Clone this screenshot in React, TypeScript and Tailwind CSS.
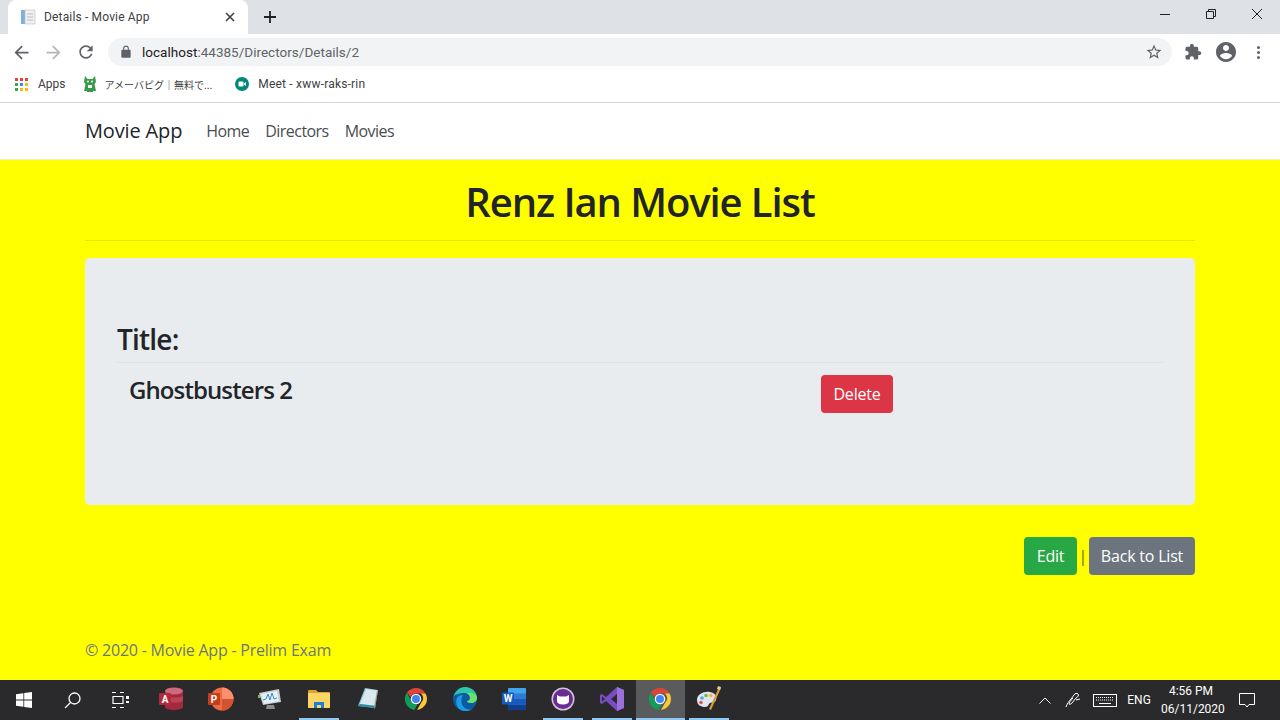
import React from "react";

const F = "font-['Open_Sans','Noto_Sans',sans-serif]";

function M({ d, size = 16, color = "#5f6368", className = "" }: { d: string; size?: number; color?: string; className?: string }) {
  return (
    <svg width={size} height={size} viewBox="0 0 24 24" fill={color} className={`shrink-0 ${className}`}>
      <path d={d} />
    </svg>
  );
}

const BACK = "M20 11H7.83l5.59-5.59L12 4l-8 8 8 8 1.41-1.41L7.83 13H20v-2z";
const FWD = "M4 11h12.17l-5.59-5.59L12 4l8 8-8 8-1.41-1.41L16.17 13H4v-2z";
const RELOAD = "M17.65 6.35C16.2 4.9 14.21 4 12 4c-4.42 0-7.99 3.58-7.99 8s3.57 8 7.99 8c3.73 0 6.84-2.55 7.73-6h-2.08c-.82 2.33-3.04 4-5.65 4-3.31 0-6-2.69-6-6s2.69-6 6-6c1.66 0 3.14.69 4.22 1.78L13 11h7V4l-2.35 2.35z";
const STAR = "M22 9.24l-7.19-.62L12 2 9.19 8.63 2 9.24l5.46 4.73L5.82 21 12 17.27 18.18 21l-1.63-7.03L22 9.24zM12 15.4l-3.76 2.27 1-4.28-3.32-2.88 4.38-.38L12 6.1l1.71 4.04 4.38.38-3.32 2.88 1 4.28L12 15.4z";
const PUZZLE = "M20.5 11H19V7c0-1.1-.9-2-2-2h-4V3.5C13 2.12 11.88 1 10.5 1S8 2.12 8 3.5V5H4c-1.1 0-1.99.9-1.99 2v3.8H3.5c1.49 0 2.7 1.21 2.7 2.7s-1.21 2.7-2.7 2.7H2V20c0 1.1.9 2 2 2h3.8v-1.5c0-1.49 1.21-2.7 2.7-2.7 1.49 0 2.7 1.21 2.7 2.7V22H17c1.1 0 2-.9 2-2v-4h1.5c1.38 0 2.5-1.12 2.5-2.5S21.88 11 20.5 11z";
const ACCOUNT = "M12 2C6.48 2 2 6.48 2 12s4.48 10 10 10 10-4.48 10-10S17.52 2 12 2zm0 3c1.66 0 3 1.34 3 3s-1.34 3-3 3-3-1.34-3-3 1.34-3 3-3zm0 14.2c-2.5 0-4.71-1.28-6-3.22.03-1.99 4-3.08 6-3.08 1.99 0 5.97 1.09 6 3.08-1.29 1.94-3.5 3.22-6 3.22z";
const LOCK = "M18 8h-1V6c0-2.76-2.24-5-5-5S7 3.24 7 6v2H6c-1.1 0-2 .9-2 2v10c0 1.1.9 2 2 2h12c1.1 0 2-.9 2-2V10c0-1.1-.9-2-2-2zM9 6c0-1.66 1.34-3 3-3s3 1.34 3 3v2H9V6z";

function AppsGrid() {
  const c = ["#ea4335", "#ea4335", "#ea4335", "#34a853", "#4285f4", "#fbbc04", "#34a853", "#fbbc04", "#fbbc04"];
  return (
    <div className="grid grid-cols-3 gap-[2px] w-[13px] shrink-0">
      {c.map((x, i) => (
        <span key={i} className="w-[3px] h-[3px]" style={{ background: x }} />
      ))}
    </div>
  );
}

function ChromeLogo({ size = 24 }: { size?: number }) {
  return (
    <svg width={size} height={size} viewBox="0 0 48 48">
      <path d="M24 2a22 22 0 0 1 19.05 11H24a11 11 0 0 0-10.4 7.5L5.9 11.2A22 22 0 0 1 24 2z" fill="#db4437" />
      <path d="M43.05 13A22 22 0 0 1 26 45.9l9.5-16.4a11 11 0 0 0-2-16.5z" fill="#fcc934" />
      <path d="M5.9 11.2 15.4 29.5a11 11 0 0 0 11.2 5.4L20.8 45.8A22 22 0 0 1 5.9 11.2z" fill="#0f9d58" />
      <circle cx="24" cy="24" r="10.5" fill="#fff" />
      <circle cx="24" cy="24" r="8" fill="#4285f4" />
    </svg>
  );
}

function Chrome() {
  return (
    <div className="font-['Roboto',sans-serif]">
      <div className="h-[34px] bg-[#dee1e6] flex items-end pl-2">
        <div className="w-[240px] h-[34px] bg-white rounded-t-[8px] flex items-center pl-[12px] pr-[12px] text-[12px] tracking-[0.16px] text-[#3c4043]">
          <svg width="16" height="16" viewBox="0 0 16 16" className="mr-[8px] shrink-0">
            <rect x="1" y="1" width="4" height="14" fill="#7fb0dc" />
            <rect x="5" y="1" width="10" height="14" fill="#eef0f2" stroke="#b9bec4" strokeWidth="0.6" />
            <path d="M7 5h6M7 8h6M7 11h6" stroke="#b9bec4" strokeWidth="1" />
          </svg>
          <span className="flex-1">Details - Movie App</span>
          <svg width="10" height="10" viewBox="0 0 10 10" stroke="#3c4043" strokeWidth="1.6" className="mr-[1px]">
            <path d="M1 1l8 8M9 1l-8 8" />
          </svg>
        </div>
        <svg width="12" height="12" viewBox="0 0 12 12" stroke="#202124" strokeWidth="1.8" className="ml-[16px] mb-[11px]">
          <path d="M6 0v12M0 6h12" />
        </svg>
        <div className="flex-1" />
        <div className="flex self-start items-center gap-[36px] pr-[18px] h-[28px]">
          <svg width="10" height="10" viewBox="0 0 10 10" stroke="#202124" strokeWidth="1" fill="none">
            <path d="M0 5.5h10" />
          </svg>
          <svg width="10" height="10" viewBox="0 0 10 10" stroke="#202124" strokeWidth="1" fill="none">
            <path d="M.5 2.5h7v7h-7zM2.5 2.5v-2h7v7h-2" />
          </svg>
          <svg width="10" height="10" viewBox="0 0 10 10" stroke="#202124" strokeWidth="1" fill="none">
            <path d="M0 0l10 10M10 0L0 10" />
          </svg>
        </div>
      </div>
      <div className="h-[36px] bg-white flex items-center pl-[11px]">
        <M d={BACK} size={21} />
        <M d={FWD} size={21} color="#b4b7bb" className="ml-[11px]" />
        <M d={RELOAD} size={20} className="ml-[12px]" />
        <div className="ml-[12px] w-[1064px] h-[28px] bg-[#f1f3f4] rounded-full flex items-center pl-[11px] pr-[9px] text-[13.5px] tracking-[0.02px]">
          <M d={LOCK} size={14} className="mr-[9px]" />
          <span className="text-[#202124]">localhost</span>
          <span className="text-[#5f6368]">:44385/Directors/Details/2</span>
          <div className="flex-1" />
          <M d={STAR} size={18} />
        </div>
        <M d={PUZZLE} size={18} className="ml-[12px]" />
        <M d={ACCOUNT} size={24} className="ml-[12px] mr-[19px]" />
        <div className="flex flex-col gap-[2px]">
          <span className="w-[3px] h-[3px] rounded-full bg-[#5f6368]" />
          <span className="w-[3px] h-[3px] rounded-full bg-[#5f6368]" />
          <span className="w-[3px] h-[3px] rounded-full bg-[#5f6368]" />
        </div>
      </div>
      <div className="h-[33px] bg-white flex items-center pl-[15px] pb-[4px] text-[12px] text-[#3c4043] border-b border-[#d6d6d6]">
        <AppsGrid />
        <span className="ml-[10px]">Apps</span>
        <svg width="14" height="16" viewBox="0 0 14 16" className="ml-[17px] shrink-0">
          <path d="M2 0l2.5 3h5L12 0l1 6-1.500 2L13 15h-3v1H4v-1H1l1.500-7L1 6z" fill="#3a9a4b" />
          <circle cx="5" cy="5.500" r="1" fill="#fff" />
          <circle cx="9" cy="5.500" r="1" fill="#fff" />
          <rect x="5" y="9" width="4" height="3" fill="#fff" />
        </svg>
        <span className="ml-[8px] font-['Noto_Sans_CJK_JP',sans-serif] text-[10px]">アメーバピグ｜無料で...</span>
        <svg width="16" height="16" viewBox="0 0 16 16" className="ml-[22px] shrink-0">
          <circle cx="8" cy="8" r="7" fill="#00897b" />
          <rect x="4.500" y="5.500" width="5" height="5" rx="1" fill="#fff" />
          <path d="M10 7.500l2-1.500v4l-2-1.500z" fill="#fff" />
        </svg>
        <span className="ml-[8px] tracking-[0.2px]">Meet - xww-raks-rin</span>
      </div>
    </div>
  );
}

function Access() {
  return (
    <svg width="26" height="24" viewBox="0 0 26 24">
      <path d="M6 4c0-4 18-4 18 0v16c0 4-18 4-18 0z" fill="#a4293f" />
      <ellipse cx="15" cy="4" rx="9" ry="3.500" fill="#cf6b7e" />
      <path d="M6 9c3 2 15 2 18 0v5c-3 2-15 2-18 0z" fill="#bb4458" />
      <rect x="0" y="6" width="12" height="12" rx="1" fill="#b02a3a" />
      <text x="6" y="15.500" textAnchor="middle" fontSize="10" fontWeight="700" fill="#fff" fontFamily="Roboto, sans-serif">A</text>
    </svg>
  );
}

function Ppt() {
  return (
    <svg width="26" height="24" viewBox="0 0 26 24">
      <circle cx="14" cy="12" r="11.500" fill="#ed6c47" />
      <path d="M14 .5A11.500 11.500 0 0 1 25.500 12H14z" fill="#ff8f6b" />
      <path d="M14 12h11.500A11.500 11.500 0 0 1 14 23.500z" fill="#d35230" />
      <rect x="0" y="6" width="12" height="12" rx="1" fill="#c43e1c" />
      <text x="6" y="15.500" textAnchor="middle" fontSize="10" fontWeight="700" fill="#fff" fontFamily="Roboto, sans-serif">P</text>
    </svg>
  );
}

function Perf() {
  return (
    <svg width="24" height="24" viewBox="0 0 24 24">
      <path d="M1 6l20-4 2 13-18 3z" fill="#c9ccd0" />
      <path d="M3 7l16-3 2 10-15 3z" fill="#e4f0f7" />
      <path d="M5 13l3-1 2-5 2 6 2-7 2 6 3-1" fill="none" stroke="#3d8ec4" strokeWidth="1" />
      <path d="M9 18h7l1 4H8z" fill="#8a8d90" />
      <rect x="0" y="8" width="2" height="3" fill="#7bc043" />
    </svg>
  );
}

function Folder() {
  return (
    <svg width="22" height="20" viewBox="0 0 22 20">
      <path d="M0 2a1 1 0 0 1 1-1h7l2 2h11a1 1 0 0 1 1 1v14a1 1 0 0 1-1 1H1a1 1 0 0 1-1-1z" fill="#d9a52c" />
      <rect x="0" y="4" width="22" height="15" rx="1" fill="#fbd666" />
      <path d="M6 19v-6h10v6h-3v-3h-4v3z" fill="#1c7fd6" />
    </svg>
  );
}

function Notes() {
  return (
    <svg width="22" height="24" viewBox="0 0 22 24">
      <path d="M8 1l13 2-3 18-17-2z" fill="#8fc7dc" />
      <path d="M9 2l11 1.500-3 15L3 17z" fill="#d9e9ef" />
      <path d="M1 19l17 2 1-2-16-2z" fill="#2b8ba8" />
      <path d="M20 5l1-2-3 18-1 2z" fill="#c98a2e" />
    </svg>
  );
}

function Edge() {
  return (
    <svg width="24" height="24" viewBox="0 0 24 24">
      <circle cx="12" cy="12" r="12" fill="#0c59a4" />
      <path d="M.5 10C2 4 7 0 12 0c7 0 12 5 12 11 0 3-3 5-6 5-2 0-4-1-4-2 0 0 3 0 3-3 0-3-3-5-6-5C7 6 2 7 .5 10z" fill="#2fc5a8" />
      <path d="M24 11c0 3-3 5-6 5-2 0-4-1-4-2 2 0 3-1 3-3 0-2-1-4-3-5 5-1 10 1 10 5z" fill="#6ce06a" />
      <path d="M8 23c-4-2-6-7-4-12 1-2 3-3 6-3-3 4-2 12 4 14 2 1 4 1 6 0-3 2-8 3-12 1z" fill="#1b9de2" />
    </svg>
  );
}

function Word() {
  return (
    <svg width="24" height="22" viewBox="0 0 24 22">
      <rect x="6" y="0" width="18" height="22" rx="1" fill="#41a5ee" />
      <rect x="6" y="5.500" width="18" height="5.500" fill="#2b7cd3" />
      <rect x="6" y="11" width="18" height="5.500" fill="#185abd" />
      <path d="M6 16.500h18V21a1 1 0 0 1-1 1H7a1 1 0 0 1-1-1z" fill="#103f91" />
      <rect x="0" y="4.500" width="12" height="12" rx="1" fill="#185abd" />
      <text x="6" y="14" textAnchor="middle" fontSize="10" fontWeight="700" fill="#fff" fontFamily="Roboto, sans-serif">W</text>
    </svg>
  );
}

function Cat() {
  return (
    <svg width="24" height="24" viewBox="0 0 24 24">
      <circle cx="12" cy="12" r="11.500" fill="#cfc6dd" />
      <circle cx="12" cy="12" r="10" fill="#6a2c91" />
      <path d="M6 8l3 1.500h6L18 8v6c0 2-2 3.500-6 3.500S6 16 6 14z" fill="#fff" />
    </svg>
  );
}

function VS() {
  return (
    <svg width="24" height="24" viewBox="0 0 24 24">
      <path d="M17 0l7 3v18l-7 3-11-10-4 3-2-1V8l2-1 4 3zM17 7l-6 5 6 5z" fill="#7a4cc2" />
      <path d="M17 0l7 3v18l-7 3z" fill="#9b6fdc" />
      <path d="M2 9.500l3 2.500-3 2.500z" fill="#2a2a2c" />
    </svg>
  );
}

function Palette() {
  return (
    <svg width="26" height="26" viewBox="0 0 26 26">
      <path d="M1 14C1 8 8 5 14 6c5 1 7 4 6 8-1 3-4 2-6 3s-1 4-5 4-8-2-8-7z" fill="#dfe6ee" />
      <circle cx="6" cy="12" r="1.800" fill="#4ea5de" />
      <circle cx="10" cy="9.500" r="1.800" fill="#7ab648" />
      <circle cx="15" cy="9.500" r="1.800" fill="#f2b134" />
      <circle cx="5" cy="16.500" r="1.800" fill="#e2574c" />
      <path d="M23 1l2 1-10 22-2-1z" fill="#d79a3e" />
      <path d="M22 0l3 1-1 3-3-1z" fill="#e9c98f" />
    </svg>
  );
}

function TaskApp({ active = false, running = false, children }: { active?: boolean; running?: boolean; children: React.ReactNode }) {
  return (
    <div className={`w-[48.8px] h-[40px] flex flex-col items-center ${active ? "bg-[#5a5b5d]" : ""}`}>
      <div className="flex-1 flex items-center justify-center">{children}</div>
      <div className={`h-[2px] ${active ? "w-full" : "w-[40px]"} ${running || active ? "bg-[#8fc8f2]" : ""}`} />
    </div>
  );
}

function Taskbar() {
  return (
    <div className="h-[40px] bg-[#2a2a2c] flex items-center text-white font-['Roboto',sans-serif]">
      <div className="w-[48px] flex justify-center">
        <svg width="16" height="16" viewBox="0 0 16 16" fill="#fff">
          <path d="M0 2.300 7.400 1.200V7.600H0ZM8.200 1.100 16 0V7.600H8.200ZM0 8.400H7.400V14.800L0 13.700ZM8.200 8.400H16V16L8.200 14.900Z" />
        </svg>
      </div>
      <div className="w-[48px] flex justify-center">
        <svg width="17" height="17" viewBox="0 0 17 17" fill="none" stroke="#fff" strokeWidth="1.300">
          <circle cx="10.500" cy="6.500" r="5.500" />
          <path d="M6.500 10.500L1 16" />
        </svg>
      </div>
      <div className="w-[48px] flex justify-center">
        <svg width="17" height="16" viewBox="0 0 17 16" fill="none" stroke="#fff" strokeWidth="1.200">
          <path d="M0 .5h4M0 15.500h4M1 4.500h10v7H1zM8 .5h4M8 15.500h4" />
          <rect x="14" y="4" width="3" height="3" fill="#fff" stroke="none" />
          <rect x="14" y="9" width="3" height="2" fill="#fff" stroke="none" />
        </svg>
      </div>
      <div className="flex pl-[4px]">
        <TaskApp><Access /></TaskApp>
        <TaskApp><Ppt /></TaskApp>
        <TaskApp><Perf /></TaskApp>
        <TaskApp running><Folder /></TaskApp>
        <TaskApp><Notes /></TaskApp>
        <TaskApp><ChromeLogo /></TaskApp>
        <TaskApp><Edge /></TaskApp>
        <TaskApp><Word /></TaskApp>
        <TaskApp running><Cat /></TaskApp>
        <TaskApp running><VS /></TaskApp>
        <TaskApp active><ChromeLogo /></TaskApp>
        <TaskApp running><Palette /></TaskApp>
      </div>
      <div className="flex-1" />
      <svg width="12" height="7" viewBox="0 0 12 7" fill="none" stroke="#fff" strokeWidth="1">
        <path d="M.5 6.500L6 1l5.500 5.500" />
      </svg>
      <svg width="16" height="16" viewBox="0 0 16 16" fill="none" stroke="#fff" className="ml-[14px]">
        <path d="M1 15c1-3 3-6 5-8l3-4c1-2 3-2 4-1s0 3-2 4L7 11c-1 1-3 2-3 1s2-4 4-6" />
        <path d="M11 8l4-1" />
      </svg>
      <svg width="24" height="13" viewBox="0 0 24 13" fill="none" stroke="#fff" className="ml-[12px]">
        <rect x=".5" y=".5" width="23" height="12" />
        <path d="M3 3.500h18M3 6h18" strokeDasharray="1 1" />
        <path d="M6 9.500h12" />
      </svg>
      <span className="ml-[10px] text-[12px] tracking-[0.1px]">ENG</span>
      <div className="ml-[10px] w-[60px] text-[12px] leading-[18px] text-center">
        <div>4:56 PM</div>
        <div>06/11/2020</div>
      </div>
      <svg width="16" height="15" viewBox="0 0 16 15" fill="none" stroke="#fff" className="ml-[18px] mr-[25px]">
        <path d="M.5.500h15v11H10l-2 2.500-2-2.500H.5z" />
      </svg>
    </div>
  );
}

export default function App() {
  return (
    <div className={`w-[1280px] h-[720px] overflow-hidden flex flex-col ${F}`}>
      <Chrome />
      <nav className="h-[57px] bg-white flex items-center pl-[85px] border-b border-[#f0f0c0]">
        <span className="text-[20px] tracking-[-0.15px] text-[#212529] mr-[24px]">Movie App</span>
        <div className="flex gap-[16px] text-[16px] tracking-[-0.55px] text-[#4a4d50]">
          <span>Home</span>
          <span>Directors</span>
          <span>Movies</span>
        </div>
      </nav>
      <main className="flex-1 bg-[#ffff00] px-[85px] flex flex-col text-[#212529]">
        <h1 className="h-[81px] flex items-center justify-center border-b border-[#e6e600] text-[40px] font-semibold tracking-[-1.1px] pt-[4px]">
          Renz Ian Movie List
        </h1>
        <section className="mt-[17px] h-[247px] bg-[#e9ecef] rounded-[5px] px-[32px] pt-[64px]">
          <h2 className="h-[41px] text-[28px] leading-[34px] font-semibold tracking-[-0.8px] border-b border-[#dee2e6]">Title:</h2>
          <div className="flex pt-[12px]">
            <div className="w-[704px] pl-[12px] text-[24px] leading-[29px] font-semibold tracking-[-0.9px]">Ghostbusters 2</div>
            <button className="h-[38px] w-[72px] bg-[#dc3545] text-white rounded-[4px] text-[16px] tracking-[-0.2px]">Delete</button>
          </div>
        </section>
        <div className="mt-[32px] flex justify-end items-center">
          <button className="h-[38px] w-[53px] bg-[#28a745] text-white rounded-[4px] text-[16px] tracking-[-0.2px]">Edit</button>
          <span className="w-[12px] text-center text-[16px] text-[#7a5c00]">|</span>
          <button className="h-[38px] w-[106px] bg-[#6c757d] text-white rounded-[4px] text-[16px] tracking-[-0.2px]">Back to List</button>
        </div>
        <footer className="mt-[63px] text-[16px] tracking-[-0.22px] text-[#6c757d]">© 2020 - Movie App - Prelim Exam</footer>
      </main>
      <Taskbar />
    </div>
  );
}
